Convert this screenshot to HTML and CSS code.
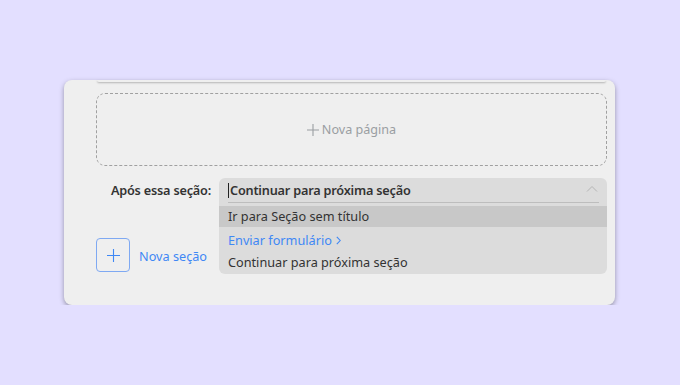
FILE: index.html
```html
<!DOCTYPE html>
<html lang="pt-BR">
<head>
    <meta charset="UTF-8">
    <meta name="viewport" content="width=device-width, initial-scale=1.0">
    <title>Seção do formulário</title>
    <link rel="stylesheet" href="styles.css">
</head>
<body>
    <div class="section-card">
        <div class="prev-page"></div>
        <div class="new-page">
            <svg class="plus" width="12" height="12" viewBox="0 0 12 12"><path d="M6 0v12M0 6h12" stroke="#9a9ea2" stroke-width="1.1" fill="none"/></svg>
            Nova página
        </div>
        <div class="after-row">
            <div class="left-col">
                <div class="after-label">Após essa seção:</div>
                <div class="new-section">
                    <button class="add-btn">
                        <svg width="15" height="15" viewBox="0 0 15 15"><path d="M7.5 1v13M1 7.5h13" stroke="#3f88f5" stroke-width="1.1" fill="none"/></svg>
                    </button>
                    <span class="new-section-text">Nova seção</span>
                </div>
            </div>
            <div class="select">
                <div class="select-head">
                    <span class="caret"></span>
                    <span class="select-value">Continuar para próxima seção</span>
                    <svg class="chevron" width="12" height="7" viewBox="0 0 12 7"><path d="M1 6.5L6 1.5l5 5" stroke="#b4b4b4" stroke-width="1" fill="none"/></svg>
                </div>
                <div class="select-options">
                    <div class="option active">Ir para Seção sem título</div>
                    <div class="option link">Enviar formulário
                        <svg class="arrow" width="5" height="9" viewBox="0 0 5 9"><path d="M0.8 0.8L4.2 4.5 0.8 8.2" stroke="#3f88f5" stroke-width="1.1" fill="none"/></svg>
                    </div>
                    <div class="option">Continuar para próxima seção</div>
                </div>
            </div>
        </div>
    </div>
</body>
</html>
```

FILE: styles.css
```css
body {
    margin: 0;
    background: #e3dfff;
    font-family: 'Noto Sans', 'Open Sans', sans-serif;
    font-size: 12.7px;
    color: #333;
}
.section-card {
    position: relative;
    margin: 80px 0 0 64px;
    width: 511px;
    height: 225px;
    padding: 0 8px 0 32px;
    background: #efefef;
    border-radius: 8px;
    box-shadow: 0 2px 5px rgba(0,0,0,0.35);
}
.prev-page {
    height: 2px;
    background: #efefef;
    border-radius: 0 0 8px 8px;
    box-shadow: 0 1px 2px rgba(0,0,0,0.25);
    margin: 0 1px;
}
.new-page {
    margin-top: 11px;
    height: 71px;
    border: 1px dashed #a0a0a0;
    border-radius: 9px;
    display: flex;
    justify-content: center;
    align-items: center;
    color: #9a9ea2;
    font-size: 12.6px;
}
.plus {
    margin-right: 3px;
}
.after-row {
    display: flex;
    margin-top: 12px;
}
.left-col {
    width: 123px;
    flex-shrink: 0;
}
.after-label {
    text-align: right;
    padding-right: 8px;
    font-weight: 600;
    letter-spacing: -0.2px;
    line-height: 24px;
}
.new-section {
    display: flex;
    align-items: center;
    margin-top: 36px;
}
.add-btn {
    width: 34px;
    height: 34px;
    border: 1px solid #7fa9f2;
    border-radius: 4px;
    background: transparent;
    display: flex;
    align-items: center;
    justify-content: center;
    padding: 0;
}
.new-section-text {
    margin-left: 9px;
    color: #3f88f5;
    margin-top: 1px;
}
.select {
    width: 388px;
    height: 96px;
    background: #dcdcdc;
    border-radius: 6px;
}
.select-head {
    display: flex;
    align-items: center;
    margin: 0 8px 0 9px;
    height: 24px;
    border-bottom: 1px solid #bdbdbd;
}
.caret {
    width: 1px;
    height: 15px;
    background: #222;
}
.select-value {
    font-weight: 600;
    letter-spacing: -0.2px;
    flex: 1;
    margin-left: 1px;
}
.chevron {
    margin-right: 1px;
    margin-bottom: 4px;
}
.select-options {
    padding-top: 3px;
}
.option {
    height: 21px;
    line-height: 21px;
    padding-left: 9px;
}
.option.active {
    background: #c8c8c8;
}
.option.link {
    color: #3f88f5;
    height: 23px;
    line-height: 23px;
    margin-top: 2px;
}
.arrow {
    margin-left: 1px;
}
```
